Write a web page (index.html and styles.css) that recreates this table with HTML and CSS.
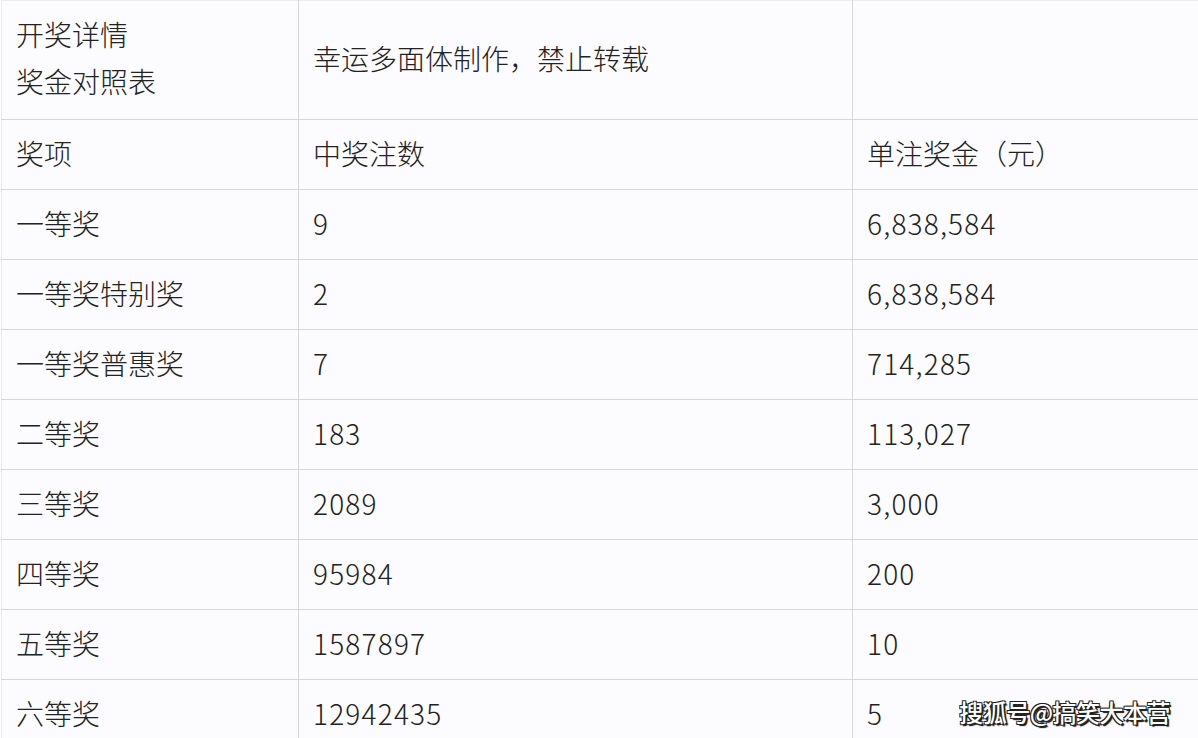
FILE: index.html
```html
<!DOCTYPE html>
<html lang="zh-CN">
<head>
<meta charset="utf-8">
<title>开奖详情</title>
<link rel="stylesheet" href="styles.css">
</head>
<body>
<div class="page">
  <table class="prize">
    <colgroup>
      <col class="c1"><col class="c2"><col class="c3">
    </colgroup>
    <tr class="head">
      <td><div class="two">开奖详情</div><div class="two">奖金对照表</div></td>
      <td>幸运多面体制作，禁止转载</td>
      <td></td>
    </tr>
    <tr class="label"><td>奖项</td><td>中奖注数</td><td>单注奖金（元）</td></tr>
    <tr><td>一等奖</td><td>9</td><td>6,838,584</td></tr>
    <tr><td>一等奖特别奖</td><td>2</td><td>6,838,584</td></tr>
    <tr><td>一等奖普惠奖</td><td>7</td><td>714,285</td></tr>
    <tr><td>二等奖</td><td>183</td><td>113,027</td></tr>
    <tr><td>三等奖</td><td>2089</td><td>3,000</td></tr>
    <tr><td>四等奖</td><td>95984</td><td>200</td></tr>
    <tr><td>五等奖</td><td>1587897</td><td>10</td></tr>
    <tr><td>六等奖</td><td>12942435</td><td>5</td></tr>
  </table>
  <div class="mark">搜狐号@搞笑大本营</div>
</div>
</body>
</html>
```
FILE: styles.css
```css
html, body {
  margin: 0;
  padding: 0;
  background: #fcfbfe;
  overflow: hidden;
}
.page {
  position: relative;
  width: 1198px;
  height: 738px;
  overflow: hidden;
}
.prize {
  width: 1197px;
  border-collapse: collapse;
  table-layout: fixed;
  font-family: "Noto Sans CJK SC", "Noto Sans", sans-serif;
  font-size: 28px;
  font-weight: 300;
  color: #222222;
  margin-left: 1px;
  border: 1px solid #ececec;
}
.c1 { width: 297px; }
.c2 { width: 554px; }
.c3 { width: 346px; }
.prize td {
  border: 1px solid #d6d6d6;
  padding: 0 0 4px 14px;
  height: 65px;
  vertical-align: middle;
  line-height: 40px;
  white-space: nowrap;
}
.prize tr:not(.head):not(.label) td:not(:first-child) {
  letter-spacing: 1.2px;
}
.prize tr.head td {
  height: 114px;
  border-top-color: #ececec;
}
.prize td:last-child { border-right-color: #ececec; }
.prize td:first-child { border-left-color: #ececec; }
.two {
  line-height: 47px;
}
.mark {
  position: absolute;
  right: 28px;
  bottom: 9px;
  font-family: "Noto Sans CJK SC", sans-serif;
  font-size: 24px;
  font-weight: 500;
  color: #ffffff;
  letter-spacing: -0.5px;
  text-shadow: 1px 1px 0 #222, -1px -1px 0 #222, 1px -1px 0 #222, -1px 1px 0 #222, 2px 2px 1px #111;
}
```
